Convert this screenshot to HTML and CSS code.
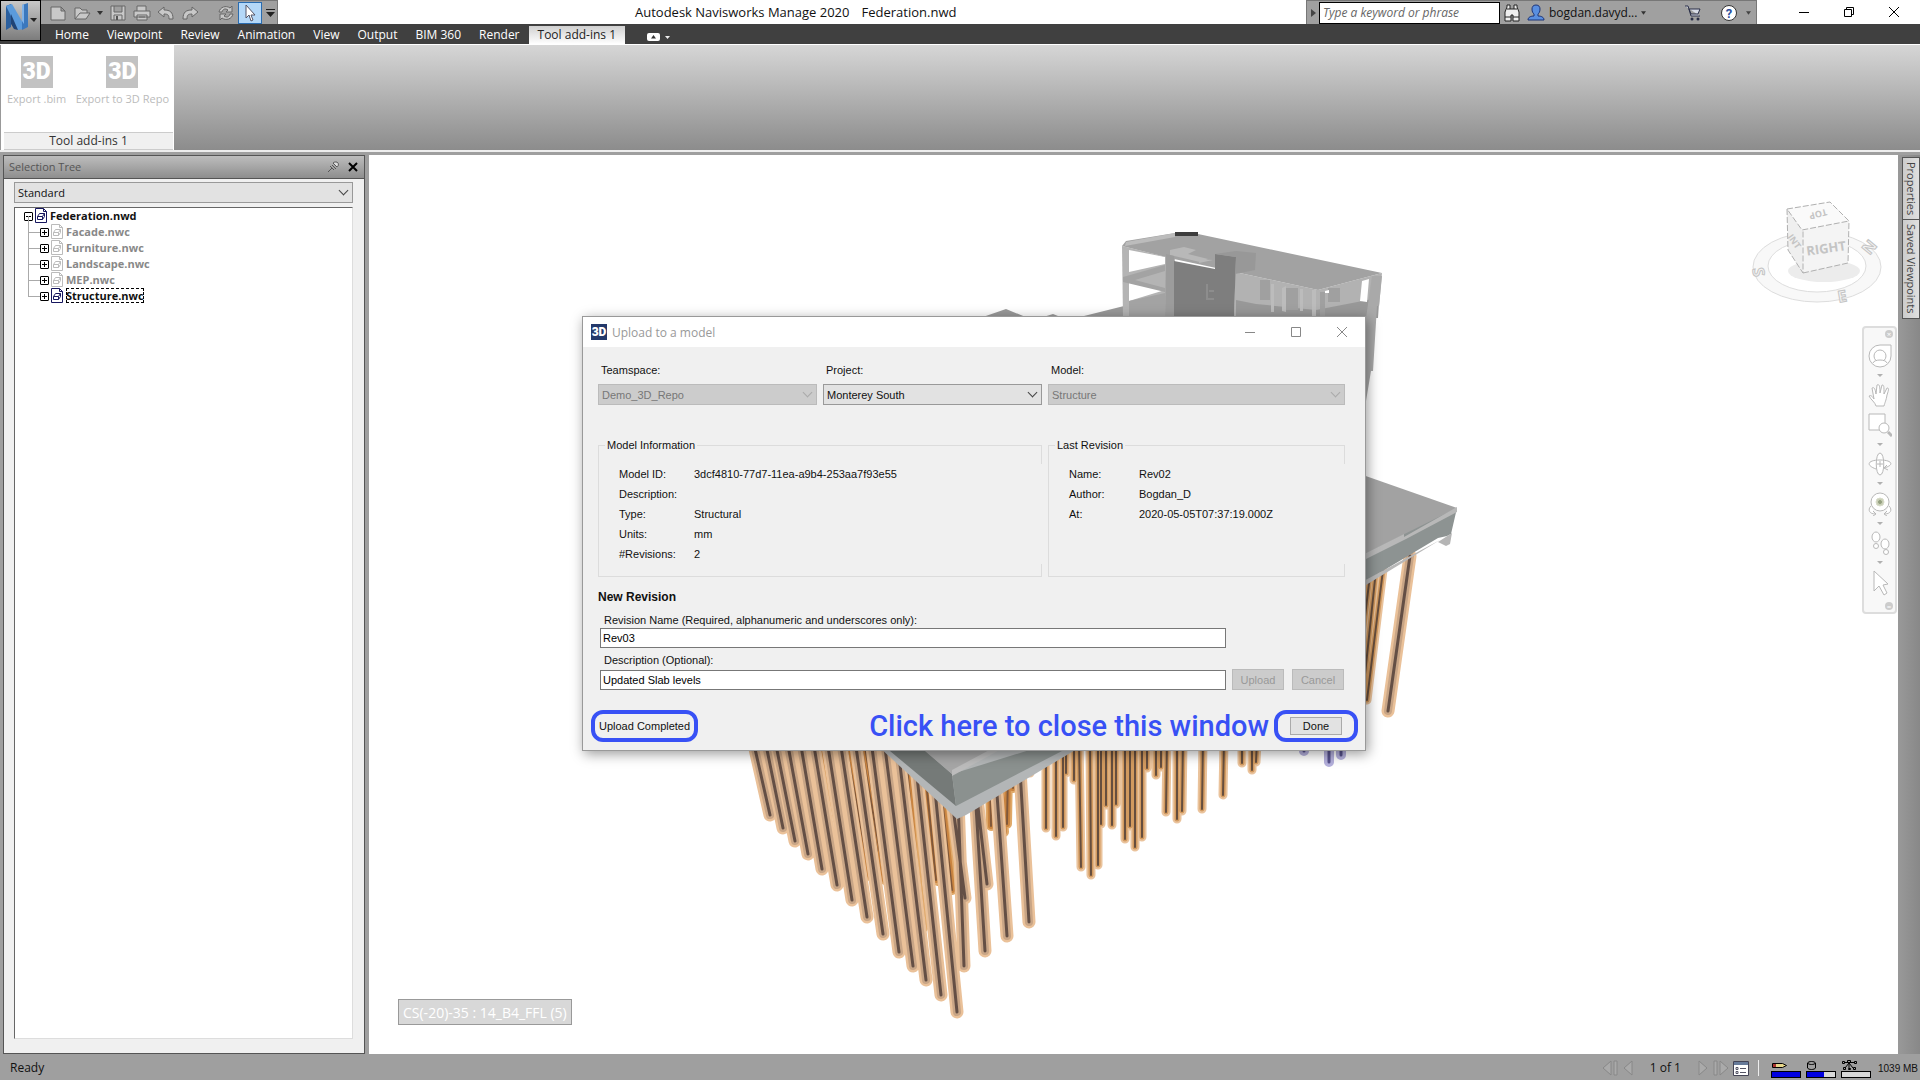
FILE: index.html
```html
<!DOCTYPE html>
<html lang="en">
<head>
    <meta charset="UTF-8">
    <meta name="viewport" content="width=device-width, initial-scale=1.0">
    <title>Autodesk Navisworks Manage 2020</title>
    <link rel="stylesheet" href="styles.css">
</head>
<body>
    <header class="top">
        <button class="app-button" aria-label="Application menu">
            <svg width="38" height="39" viewBox="0 0 38 39">
                <path d="M5 5l5-2v23l-5 3z" fill="#2b5f9e"/>
                <path d="M5 5l6-2 11 19v6l-5 1z" fill="#5b9bdc"/>
                <path d="M10 13l7 16-4-1-3-5z" fill="#1f4477"/>
                <path d="M21 4l6-2v24l-6 3z" fill="#3b78bd"/>
                <path d="M21 4l2-1v20l-2-3z" fill="#7fb2e8"/>
                <path d="M29 17h7l-3 4z" fill="#222"/>
            </svg>
        </button>
        <div class="top-rows">
            <div class="title-bar">
                <div class="quick-access">
                    <button class="qa" aria-label="New"><svg width="18" height="16" viewBox="0 0 18 16"><path d="M2 2h10l4 4v9H2z M12 2v4h4" class="qi"/></svg></button>
                    <button class="qa" aria-label="Open"><svg width="18" height="16" viewBox="0 0 18 16"><path d="M2 14V3h5l2 2h5v3 M2 14l5-6h10l-4 6z" class="qi"/></svg></button>
                    <button class="qa drop" aria-label="Open options"><svg width="6" height="4" viewBox="0 0 6 4"><path d="M0 0h6L3 4z" fill="#333"/></svg></button>
                    <button class="qa" aria-label="Save"><svg width="18" height="16" viewBox="0 0 18 16"><path d="M2 1h14v14H2z M5 1v6h8V1 M5 15v-5h8v5" class="qi"/><path d="M7 11h2v4H7z" fill="#555"/></svg></button>
                    <button class="qa" aria-label="Print"><svg width="18" height="16" viewBox="0 0 18 16"><path d="M4 6V1h9v5 M1 6h16v6H1z M4 10h10v5H4z M6 12h6" class="qi"/></svg></button>
                    <button class="qa" aria-label="Undo"><svg width="18" height="16" viewBox="0 0 18 16"><path d="M1 7l6-5v3c6 0 9 2 9 9h-4c0-4-1-5-5-5v3z" class="qi"/></svg></button>
                    <button class="qa" aria-label="Redo"><svg width="18" height="16" viewBox="0 0 18 16"><path d="M17 7l-6-5v3C5 5 2 7 2 14h4c0-4 1-5 5-5v3z" class="qi"/></svg></button>
                    <button class="qa refresh" aria-label="Refresh"><svg width="18" height="16" viewBox="0 0 18 16"><path d="M2 7c1-5 7-7 11-4l2-2v6H9l2-2C8 3 6 4 5 7z M16 9c-1 5-7 7-11 4l-2 2V9h6l-2 2c3 2 5 1 6-2z" class="qi"/></svg></button>
                    <button class="qa select-tool" aria-label="Select"><svg width="14" height="18" viewBox="0 0 14 18"><path d="M3 1v13l3-3 2 6 2-1-2-5h4z" fill="#fff" stroke="#556"/></svg></button>
                    <button class="qa drop" aria-label="Customize"><svg width="9" height="8" viewBox="0 0 9 8"><path d="M0 0h9v1H0z M0 3h9L4.500 8z" fill="#222"/></svg></button>
                </div>
                <div class="app-title"><span>Autodesk Navisworks Manage 2020</span><span>Federation.nwd</span></div>
                <div class="info-center">
                    <svg width="5" height="8" viewBox="0 0 5 8"><path d="M0 0l5 4-5 4z" fill="#444"/></svg>
                    <input class="search" type="text" placeholder="Type a keyword or phrase" aria-label="Search">
                    <button class="info-btn" aria-label="Find"><svg width="18" height="18" viewBox="0 0 18 18"><path d="M2 8l2-5V1h3v4h4V1h3v2l2 5v9h-6v-6H8v6H2z M2 13h6 M10 13h6 M4 5h3 M11 5h3" fill="#eee" stroke="#222"/></svg></button>
                    <button class="info-btn user"><svg width="18" height="18" viewBox="0 0 18 18"><path d="M9 1c3 0 4 2 4 4 0 3-1 4-2 5v2c3 0 6 1 6 4H1c0-3 3-4 6-4v-2C6 9 5 8 5 5c0-2 1-4 4-4z" fill="#5a8fe0" stroke="#1d3478"/></svg><span>bogdan.davyd...</span><svg width="5" height="4" viewBox="0 0 6 4"><path d="M0 0h6L3 4z" fill="#333"/></svg></button>
                    <button class="info-btn cart" aria-label="Store"><svg width="18" height="18" viewBox="0 0 18 18"><path d="M1 2h3l3 10h9 M5 5h11l-2 5H7z" fill="#d8dde8" stroke="#2a2f48"/><circle cx="8" cy="15" r="1.500" fill="#2a2f48"/><circle cx="14" cy="15" r="1.500" fill="#2a2f48"/></svg></button>
                    <button class="info-btn help" aria-label="Help"><svg width="18" height="18" viewBox="0 0 18 18"><circle cx="9" cy="9" r="7.500" fill="#fff" stroke="#333"/><text x="9" y="14" class="q-mark">?</text></svg></button>
                    <svg width="5" height="4" viewBox="0 0 6 4"><path d="M0 0h6L3 4z" fill="#444"/></svg>
                </div>
                <div class="window-buttons">
                    <button aria-label="Minimize"><svg width="12" height="12" viewBox="0 0 12 12"><path d="M1 6.500h10" stroke="#000"/></svg></button>
                    <button aria-label="Restore"><svg width="12" height="12" viewBox="0 0 12 12"><path d="M1.500 3.500h7v7h-7z M3.500 3V1.500h7v7H9" fill="none" stroke="#000"/></svg></button>
                    <button aria-label="Close"><svg width="12" height="12" viewBox="0 0 12 12"><path d="M1 1l10 10M11 1L1 11" stroke="#000"/></svg></button>
                </div>
            </div>
            <nav class="menu">
                <a href="#">Home</a>
                <a href="#">Viewpoint</a>
                <a href="#">Review</a>
                <a href="#">Animation</a>
                <a href="#">View</a>
                <a href="#">Output</a>
                <a href="#">BIM 360</a>
                <a href="#">Render</a>
                <a href="#" class="active">Tool add-ins 1</a>
                <button class="ribbon-toggle" aria-label="Minimize ribbon"><svg width="24" height="8" viewBox="0 0 24 8"><rect width="13" height="8" rx="2" fill="#fff"/><path d="M4 5.500L6.500 2 9 5.500z" fill="#333"/><path d="M18 3h5l-2.500 3z" fill="#eee"/></svg></button>
            </nav>
        </div>
    </header>

    <section class="ribbon">
        <div class="ribbon-panel">
            <div class="ribbon-tools">
                <button disabled><span class="logo-3d">3D</span>Export .bim</button>
                <button disabled><span class="logo-3d">3D</span>Export to 3D Repo</button>
            </div>
            <div class="ribbon-label">Tool add-ins 1</div>
        </div>
    </section>

    <main class="workspace">
        <aside class="tree-panel">
            <div class="panel-head">
                <h2>Selection Tree</h2>
                <button aria-label="Pin"><svg width="12" height="12" viewBox="0 0 12 12"><path d="M1 11l4-4 M3 5l4 4 M5 4l4 4 M6 2l4 4c2-1 2-5-1-5-1 0-2 0-3 1z" fill="#ddd" stroke="#555"/></svg></button>
                <button aria-label="Close"><svg width="10" height="10" viewBox="0 0 10 10"><path d="M1 1l8 8M9 1L1 9" stroke="#000" stroke-width="2"/></svg></button>
            </div>
            <div class="panel-body">
                <div class="select">
                    <select aria-label="Tree view"><option>Standard</option></select>
                </div>
                <ul class="tree">
                    <li class="root"><button class="toggle minus" aria-label="Collapse"></button><svg class="doc" width="12" height="15" viewBox="0 0 12 15"><use href="#doc"/></svg><span>Federation.nwd</span>
                        <ul>
                            <li class="off"><button class="toggle" aria-label="Expand"></button><svg class="doc" width="12" height="15" viewBox="0 0 12 15"><use href="#doc"/></svg><span>Facade.nwc</span></li>
                            <li class="off"><button class="toggle" aria-label="Expand"></button><svg class="doc" width="12" height="15" viewBox="0 0 12 15"><use href="#doc"/></svg><span>Furniture.nwc</span></li>
                            <li class="off"><button class="toggle" aria-label="Expand"></button><svg class="doc" width="12" height="15" viewBox="0 0 12 15"><use href="#doc"/></svg><span>Landscape.nwc</span></li>
                            <li class="off"><button class="toggle" aria-label="Expand"></button><svg class="doc" width="12" height="15" viewBox="0 0 12 15"><use href="#doc"/></svg><span>MEP.nwc</span></li>
                            <li class="picked"><button class="toggle" aria-label="Expand"></button><svg class="doc" width="12" height="15" viewBox="0 0 12 15"><use href="#doc"/></svg><span>Structure.nwc</span></li>
                        </ul>
                    </li>
                </ul>
            </div>
        </aside>

        <div class="viewport">
            <svg class="scene" viewBox="369 155 1529 899" preserveAspectRatio="xMidYMid slice">
                <defs>
                    <g id="doc"><path d="M.5 .5h8l3 3v11H.5z M8.500 .5v3h3" fill="#fff" stroke="currentColor"/><path d="M2.500 8.500h5v3h-5z M2.500 8.500l2-3h5l-2 3 M9.500 5.500v3l-2 3" fill="none" stroke="currentColor"/></g>
                    <path id="piles-back" d="M772 740L792 805M798 740L813 795M788 740L808 808M806 740L825 833M832 740L846 821M822 740L838 820M845 740L870 876M858 740L877 851M864 740L884 864M876 740L895 875M838 740L860 850M850 740L872 862M890 740L908 886M900 740L923 928M912 740L930 872M905 740L918 900M922 740L936 880M930 740L948 883M926 740L947 914M940 780L952 890M860 740L885 880M873 740L900 890M887 740L915 905M990 780L991 826M1000 780L1004 832M1008 770L1007 824M1012 770L1013 788"/>
                    <path id="piles-small" d="M1046 740V828M1056 740V836M1063 740V827M1030 750V773M1066 740V773M1074 740V780M1079 740L1081 867M1090 740L1091 875M1098 740V865M1101 740V824M1106 740V805M1112 740V825M1116 740V804M1125 740V839M1135 740V847M1130 740V826M1142 740V837M1147 740V768M1156 740V775M1161 740V767M1167 740L1166 812M1177 740V819M1183 740L1182 811M1203 740L1202 809M1224 740L1223 795M1242 740V763M1252 740V770M1257 740L1256 762M1376 570L1362 703M1383 570L1367 700M1370 575L1355 700"/>
                    <path id="piles-front" d="M753 740L770 815M765 740L783 828M775 740L795 841M787 740L808 854M800 740L822 869M813 740L837 885M827 740L852 900M840 740L867 917M855 740L883 934M871 740L899 952M884 740L913 966M897 740L926 980M913 740L941 995M930 740L957 1012M952 800L965 898M958 800L964 966M976 790L987 884M975 790L985 951M996 780L1007 936M1020 770L1029 922M1410 556L1388 711"/>
                </defs>
                <!-- upper building -->
                <path d="M980 318l26-9 22 9zM1040 318l13-4 10 4zM1080 317l44-11h40v11z" fill="#9a9a9a"/>
                <path d="M1122 246l53 13v60h-52z" fill="#b4b4b4"/>
                <path d="M1129 250l36 7v7l-36 8zM1129 280l36 10-36 11z" fill="#fff"/>
                <path d="M1123 277l42-12v6l-30 9 30 8v4l-42-10zM1129 301l36-8v24h-36z" fill="#a3a3a3"/>
                <path d="M1235 272l83 18 64-17-4 45h-144z" fill="#b2b2b2"/>
                <path d="M1236 300l20 4 60 6 62-12v20h-142z" fill="#989898"/>
                <path d="M1260 280h10v20h-10zM1282 288h16v22h-16zM1320 292h5v26h-5zM1328 288h12v14h-12z" fill="#a0a0a0"/>
                <path d="M1271 284h3v28h-3zM1282 288l4-2v26l-4-1zM1300 289h3v22h-3zM1312 290h4v28h-4z" fill="#bcbcbc"/>
                <path d="M1362 281l7-2-2 23-7-1zM1325 291l4-1v3h-4z" fill="#fff"/>
                <path d="M1372 276h10l-3 30h-2l-4 65h-2l-5 30V318z" fill="#a9a9a9"/>
                <path d="M1122 246l4-5 49-8 23 1 184 39-64 17-83-18-61-13z" fill="#a2a2a2"/>
                <path d="M1126 242l49-9v4l-50 9z" fill="#bcbcbc"/>
                <path d="M1175 232h23v4h-23z" fill="#3d3d3d"/>
                <path d="M1170 250l14-3 12 3-8 4 20 5-8 3-30-7zM1199 259l14 1-14 3z" fill="#b8b8b8"/>
                <path d="M1166 254l8 2v62h-9z" fill="#9c9c9c"/>
                <path d="M1174 261l41 8v-15l21 3-2 61h-60z" fill="#7e7e7e"/>
                <path d="M1236 257l20-4-1 17-20 4zM1215 254l21-3 20 2-20 4z" fill="#989898"/>
                <path d="M1207 284v16M1209 291h5M1208 299h6" stroke="#9c9c9c" fill="none"/>
                <!-- foundation piles -->
                <path d="M845 745h100l10 60-2 85-30-8-40-20-25-40z" fill="#d6944f"/>
                <use href="#piles-back" stroke="#e0a969" stroke-width="10" stroke-linecap="round"/>
                <use href="#piles-back" stroke="#c98440" stroke-width="6" stroke-linecap="round"/>
                <use href="#piles-back" stroke="#80583a" stroke-width="2" stroke-linecap="round"/>
                <use href="#piles-small" stroke="#eac39c" stroke-width="9" stroke-linecap="round"/>
                <use href="#piles-small" stroke="#d29a5f" stroke-width="5" stroke-linecap="round"/>
                <use href="#piles-small" stroke="#664e3e" stroke-width="2" stroke-linecap="round"/>
                <use href="#piles-front" stroke="#eac199" stroke-width="13" stroke-linecap="round"/>
                <use href="#piles-front" stroke="#c8a586" stroke-width="8" stroke-linecap="round"/>
                <use href="#piles-front" stroke="#644f45" stroke-width="3" stroke-linecap="round"/>
                <path d="M1304 740v11M1329 740v22M1341 740v15" stroke="#b4b0dc" stroke-width="10" stroke-linecap="round"/>
                <path d="M1304 740v11M1329 740v22M1341 740v15" stroke="#55508a" stroke-width="3" stroke-linecap="round"/>
                <!-- slab -->
                <path d="M878 746l79 73 9-4 116-69z" fill="#b3b6b7"/>
                <path d="M884 746h36l32 28 4 32z" fill="#757a78"/>
                <path d="M952 774l110-34v11l-106 55z" fill="#8b918f"/>
                <path d="M912 740l40 34 66-34z" fill="#a6a6a6"/>
                <path d="M952 770l56-30h10l-66 36z" fill="#bcbcbc"/>
                <path d="M1360 474l97 34-51 30-46 22z" fill="#a2a2a2"/>
                <path d="M1457 508l-6 26-4 2-9 2-72 43-6 3v-28z" fill="#8d9392"/>
                <path d="M1457 507v5l-51 27-46 23v-6l44-22v3z" fill="#b8b8b8"/>
                <path d="M1438 542l14-9-2 11-4 2z" fill="#b5b5b5"/>
                <path d="M1360 583l80-43-74 45z" fill="#b8b8b8"/>
            </svg>

            <svg class="view-cube" width="140" height="110" viewBox="0 0 140 110">
                <path fill-rule="evenodd" d="M5 66a64 35 0 1 0 128 0a64 35 0 1 0-128 0z M20 65a49 26 0 1 0 98 0a49 26 0 1 0-98 0z" fill="#f8f8f8" stroke="#ddd"/>
                <ellipse cx="76" cy="70" rx="36" ry="11" fill="#ececec"/>
                <path d="M39 8l43-7 19 19-47 9z" fill="#fafafa"/>
                <path d="M39 8l15 21 1 43-15-23z" fill="#efefef"/>
                <path d="M54 29l47-9-1 42-45 10z" fill="#f4f4f4"/>
                <path d="M39 8l43-7 19 19-47 9zM39 8l1 41 15 23V29M55 72l45-10 1-42" fill="none" stroke="#b0b0b0" stroke-dasharray="6 2"/>
                <text x="78" y="52" class="face" transform="rotate(-8 78 47)">RIGHT</text>
                <text x="70" y="16" class="face top-face" transform="rotate(165 70 13)">TOP</text>
                <text x="47" y="44" class="face top-face" transform="rotate(55 47 40)">INT</text>
                <text x="11" y="77" class="point" transform="rotate(80 11 71)">S</text>
                <text x="94" y="101" class="point" transform="rotate(-10 94 95)">E</text>
                <text x="121" y="52" class="point" transform="rotate(-50 121 46)">N</text>
            </svg>

            <div class="nav-bar">
                <button class="dot" aria-label="Close navigation bar">×</button>
                <button aria-label="Steering wheel"><svg width="24" height="24" viewBox="0 0 24 24"><path d="M12 1h11v11a11 11 0 1 1-11-11z"/><circle cx="12" cy="12" r="6"/><path d="M5 19c1-4 13-4 14 0"/></svg></button>
                <i class="caret"></i>
                <button aria-label="Pan"><svg width="24" height="24" viewBox="0 0 24 24"><path d="M8 23c-1-4-5-6-7-10 2-1 3 0 5 3L4 5c2-1 3 0 4 6L9 2c2-1 3 0 3 8l2-8c2 0 2 1 2 9l3-6c2 0 2 1 0 7-1 6-2 7-3 11z"/></svg></button>
                <button aria-label="Zoom window"><svg width="24" height="24" viewBox="0 0 24 24"><path d="M12 17H1V1h16v10"/><circle cx="16" cy="15" r="5"/><path d="M20 19l4 4" stroke-width="3"/></svg></button>
                <i class="caret"></i>
                <button aria-label="Orbit"><svg width="24" height="24" viewBox="0 0 24 24"><path d="M8 17C-3 13 0 8 12 8s15 5 4 8l3-3m-3 3l4 2 M12 1c5 0 5 22 0 22S7 1 12 1z M9 12h6M12 9v6"/></svg></button>
                <i class="caret"></i>
                <button aria-label="Look around"><svg width="24" height="24" viewBox="0 0 24 24"><circle cx="12" cy="10" r="9"/><circle cx="12" cy="10" r="4" fill="#c9cfb6" stroke="#d8dccb"/><circle cx="12" cy="10" r="1.500" fill="#94a080" stroke="#94a080"/><path d="M3 14c-4 4-1 8 4 8m-2-3l3 3-3 2 M21 14c4 4 1 8-4 8m2-3l-3 3 3 2"/></svg></button>
                <i class="caret"></i>
                <button aria-label="Walk"><svg width="24" height="24" viewBox="0 0 24 24"><ellipse cx="8" cy="6" rx="4" ry="5"/><circle cx="8" cy="15" r="2.500"/><ellipse cx="17" cy="13" rx="4" ry="5"/><circle cx="18" cy="21" r="2.500"/></svg></button>
                <i class="caret"></i>
                <button aria-label="Select"><svg width="24" height="26" viewBox="0 0 24 26"><path d="M6 1v20l5-5 5 9 3-2-4-8 5-1z"/></svg></button>
                <button class="dot" aria-label="Navigation bar options">=</button>
            </div>

            <div class="grid-location">CS(-20)-35 : 14_B4_FFL (5)</div>

            <form class="dialog">
                <div class="dialog-head">
                    <span class="logo-3d">3D</span>
                    <h1>Upload to a model</h1>
                    <button type="button" aria-label="Minimize"><svg width="12" height="12" viewBox="0 0 12 12"><path d="M1 6.500h10"/></svg></button>
                    <button type="button" aria-label="Maximize"><svg width="12" height="12" viewBox="0 0 12 12"><path d="M1.500 1.500h9v9h-9z"/></svg></button>
                    <button type="button" aria-label="Close"><svg width="12" height="12" viewBox="0 0 12 12"><path d="M1 1l10 10M11 1L1 11"/></svg></button>
                </div>
                <div class="dialog-body">
                    <div class="pickers">
                        <div>
                            <label for="teamspace">Teamspace:</label>
                            <div class="select disabled"><select id="teamspace" disabled><option>Demo_3D_Repo</option></select></div>
                        </div>
                        <div>
                            <label for="project">Project:</label>
                            <div class="select"><select id="project"><option>Monterey South</option></select></div>
                        </div>
                        <div>
                            <label for="model">Model:</label>
                            <div class="select disabled"><select id="model" disabled><option>Structure</option></select></div>
                        </div>
                    </div>
                    <div class="groups">
                        <fieldset>
                            <legend>Model Information</legend>
                            <dl class="info">
                                <dt>Model ID:</dt><dd>3dcf4810-77d7-11ea-a9b4-253aa7f93e55</dd>
                                <dt>Description:</dt><dd></dd>
                                <dt>Type:</dt><dd>Structural</dd>
                                <dt>Units:</dt><dd>mm</dd>
                                <dt>#Revisions:</dt><dd>2</dd>
                            </dl>
                        </fieldset>
                        <fieldset>
                            <legend>Last Revision</legend>
                            <dl class="info">
                                <dt>Name:</dt><dd>Rev02</dd>
                                <dt>Author:</dt><dd>Bogdan_D</dd>
                                <dt>At:</dt><dd>2020-05-05T07:37:19.000Z</dd>
                            </dl>
                        </fieldset>
                    </div>
                    <h2>New Revision</h2>
                    <div class="field">
                        <label for="rev-name">Revision Name (Required, alphanumeric and underscores only):</label>
                        <input id="rev-name" type="text" value="Rev03">
                    </div>
                    <div class="field-row">
                        <div class="field">
                            <label for="rev-desc">Description (Optional):</label>
                            <input id="rev-desc" type="text" value="Updated Slab levels">
                        </div>
                        <button type="button" disabled>Upload</button>
                        <button type="button" disabled>Cancel</button>
                    </div>
                </div>
                <div class="dialog-foot">
                    <div class="ring">Upload Completed</div>
                    <strong>Click here to close this window</strong>
                    <div class="ring done"><button type="button">Done</button></div>
                </div>
            </form>
        </div>

        <div class="side-tabs">
            <button>Properties</button>
            <button>Saved Viewpoints</button>
        </div>
    </main>

    <footer class="status">
        <span class="ready">Ready</span>
        <div class="pager">
            <button aria-label="First sheet"><svg width="16" height="16" viewBox="0 0 16 16"><path d="M9 1v14L1 8zM12 1h3v14h-3z"/></svg></button>
            <button aria-label="Previous sheet"><svg width="12" height="16" viewBox="0 0 12 16"><path d="M10 1v14L2 8z"/></svg></button>
            <span>1 of 1</span>
            <button aria-label="Next sheet"><svg width="12" height="16" viewBox="0 0 12 16"><path d="M2 1v14l8-7z"/></svg></button>
            <button aria-label="Last sheet"><svg width="16" height="16" viewBox="0 0 16 16"><path d="M1 1h3v14H1zM7 1v14l8-7z"/></svg></button>
            <button aria-label="Sheet browser"><svg width="16" height="16" viewBox="0 0 16 16"><path d="M.5 1.500h15v14H.5z" fill="#fff" stroke="#445"/><path d="M1 2h14v3H1z" fill="#667a99" stroke="none"/><path d="M3 7.500h2v2H3zM7 8.500h6M3 11.500h2v2H3zM7 12.500h6" fill="none" stroke="#556"/></svg></button>
        </div>
        <div class="gauges">
            <div class="gauge"><svg width="30" height="12" viewBox="0 0 30 12"><path d="M1.500 4.500h10l4 2-4 2h-10z" fill="#e8d88a" stroke="#000"/><path d="M2 5h3v3H2z" fill="#a33"/></svg><i class="bar full"></i></div>
            <div class="gauge"><svg width="30" height="12" viewBox="0 0 30 12"><path d="M1.500 4v5c1 2 7 2 8 0V4c-1-2-7-2-8 0zc1 2 7 2 8 0" fill="none" stroke="#000"/></svg><i class="bar part"></i></div>
            <div class="gauge"><svg width="30" height="12" viewBox="0 0 30 12"><path d="M1.500 2.500h2v2h-2zM13.500 2.500h2v2h-2zM6.500 1.500h3v2h-3zM8 4v5M4 9l4-5 4 5M4 3.500h9M2.500 8.500h2v2h-2zM7.500 9.500h2v1h-2zM12.500 8.500h2v2h-2z" fill="none" stroke="#000"/></svg><i class="bar"></i></div>
        </div>
        <span class="memory">1039 MB</span>
    </footer>
</body>
</html>
```

FILE: styles.css
```css
* {
    box-sizing: border-box;
}

body {
    margin: 0;
    height: 100vh;
    display: flex;
    flex-direction: column;
    overflow: hidden;
    background: #9f9f9f;
    color: #111;
    font: 12px/16px "Open Sans", "Noto Sans", sans-serif;
}

button {
    padding: 0;
    border: 0;
    background: none;
    color: inherit;
    font: inherit;
}

svg {
    display: block;
    flex: none;
}

h1, h2, ul, dl, dd, fieldset {
    margin: 0;
    padding: 0;
}

/* title bar and menu */
.top {
    display: flex;
    background: #404040;
}

.app-button {
    width: 41px;
    height: 41px;
    border: 1px solid #000;
    background: linear-gradient(#c8c8c8, #7c7c7c);
}

.top-rows {
    flex: 1;
}

.title-bar {
    display: flex;
    justify-content: space-between;
    height: 24px;
    background: #fff;
}

.quick-access {
    display: flex;
    align-items: center;
    width: 237px;
    padding-left: 5px;
    background: #a0a0a0;
    border-top: 1px solid #777;
    border-right: 1px solid #777;
}

.qa {
    width: 24px;
    display: flex;
    justify-content: center;
}

.qa.drop {
    width: 12px;
}

.qa.refresh {
    margin-left: 12px;
}

.qa.select-tool {
    height: 22px;
    align-items: center;
    background: #b4d8f8;
    border: 1px solid #2a6cb0;
}

.qa.select-tool + .drop {
    margin-left: 2px;
}

.qi {
    fill: #c8c8c8;
    stroke: #666;
}

.app-title {
    display: flex;
    gap: 12px;
    padding-left: 357px;
    margin-right: auto;
    line-height: 24px;
    font-size: 13px;
}

.info-center {
    display: flex;
    align-items: center;
    width: 451px;
    padding: 0 5px 0 4px;
    background: #a0a0a0;
    border: 1px solid #777;
    border-width: 1px 1px 0;
}

.search {
    width: 181px;
    height: 22px;
    margin: 0 3px;
    padding: 0 3px;
    border: 1px solid #000;
    font: italic 12px "Open Sans", sans-serif;
}

.search::placeholder {
    color: #666;
}

.info-btn.user {
    display: flex;
    align-items: center;
    gap: 4px;
    margin-left: 6px;
}

.info-btn.cart {
    margin-left: auto;
}

.info-btn.help {
    margin: 0 8px 0 18px;
}

.q-mark {
    font: bold 13px Roboto, sans-serif;
    text-anchor: middle;
    fill: #2c4f9e;
}

.window-buttons {
    display: flex;
    width: 163px;
    padding-left: 24px;
}

.window-buttons button {
    width: 45px;
    display: flex;
    justify-content: center;
    align-items: center;
}

.menu {
    display: flex;
    align-items: flex-end;
    height: 20px;
    padding-left: 5px;
}

.menu a {
    padding: 0 9px;
    line-height: 18px;
    color: #fff;
    text-decoration: none;
}

.menu .active {
    background: linear-gradient(#d0d0d0, #fff);
    color: #222;
}

.ribbon-toggle {
    margin-left: 22px;
    height: 14px;
}

/* ribbon */
.ribbon {
    height: 108px;
    border-top: 1px solid #fff;
    border-bottom: 2px solid #eee;
    background: linear-gradient(#d6d6d6, #8c8c8c);
}

.ribbon-panel {
    width: 174px;
    height: 100%;
    display: flex;
    flex-direction: column;
    justify-content: space-between;
    padding: 11px 1px 0 3px;
    background: #fff;
    border-left: 1px solid #999;
}

.ribbon-tools {
    display: flex;
    justify-content: space-between;
    padding: 0 4px 0 3px;
    white-space: nowrap;
}

.ribbon-tools button {
    display: flex;
    flex-direction: column;
    align-items: center;
    gap: 3px;
    font-size: 11px;
    color: #bbb;
}

.logo-3d {
    display: block;
    width: 32px;
    background: #c2c2c2;
    color: #fff;
    font: 900 23px/32px Roboto, sans-serif;
    text-align: center;
}

.ribbon-label {
    background: #f0f0f0;
    border: 1px solid #ccc;
    border-width: 1px 0;
    text-align: center;
    color: #333;
}

/* workspace */
.workspace {
    flex: 1;
    display: flex;
    min-height: 0;
    padding-top: 3px;
    padding-left: 3px;
}

.tree-panel {
    width: 362px;
    margin-right: 4px;
    display: flex;
    flex-direction: column;
    border: 1px solid #555;
    background: #f0f0f0;
}

.panel-head {
    display: flex;
    align-items: center;
    gap: 9px;
    height: 23px;
    padding: 0 6px 0 5px;
    background: linear-gradient(#bdbdbd, #8e8e8e);
    border-bottom: 1px solid #555;
}

.panel-head h2 {
    flex: 1;
    font-size: 11px;
    font-weight: normal;
    color: #555;
}

.panel-body {
    flex: 1;
    display: flex;
    flex-direction: column;
    gap: 4px;
    padding: 3px 11px 14px 10px;
}

.select {
    position: relative;
}

.select::after {
    content: "";
    position: absolute;
    right: 6px;
    top: 5px;
    width: 6px;
    height: 6px;
    border: solid #444;
    border-width: 0 1px 1px 0;
    transform: rotate(45deg);
}

.select select {
    display: block;
    width: 100%;
    height: 21px;
    padding: 0 3px;
    appearance: none;
    border: 1px solid #999;
    border-radius: 0;
    background: #e2e2e2;
    color: #111;
    font: inherit;
}

.select.disabled::after {
    border-color: #aaa;
}

.select.disabled select {
    background: #ccc;
    border-color: #bbb;
    color: #777;
    opacity: 1;
}

.panel-body .select {
    font-size: 11px;
}

.tree {
    flex: 1;
    list-style: none;
    background: #fff;
    border: 1px solid #ddd;
    border-top: 1px solid #666;
    border-left: 1px solid #666;
    padding-left: 9px;
    font-size: 11px;
    font-weight: bold;
}

.tree ul {
    list-style: none;
    margin-left: 4px;
}

.tree ul li {
    position: relative;
    padding-left: 12px;
}

.tree ul li::before {
    content: "";
    position: absolute;
    left: 0;
    top: -8px;
    width: 11px;
    height: 16px;
    border: solid #aaa;
    border-width: 0 0 1px 1px;
}

.toggle {
    position: relative;
    width: 9px;
    height: 9px;
    border: 1px solid #000;
    border-radius: 1px;
    background: #fff;
}

.toggle::before, .toggle:not(.minus)::after {
    content: "";
    position: absolute;
    left: 1px;
    top: 3px;
    width: 5px;
    height: 1px;
    background: #000;
}

.toggle:not(.minus)::after {
    transform: rotate(90deg);
}

.doc {
    display: inline-block;
    vertical-align: top;
    margin: 0 3px 0 2px;
    color: #16165e;
}

.off {
    color: #888;
}

.off .doc {
    color: #bbb;
}

.picked span {
    outline: 1px dashed #000;
    outline-offset: -1px;
}

/* 3d viewport */
.viewport {
    flex: 1;
    position: relative;
    overflow: hidden;
    background: #fff;
}

.scene {
    width: 100%;
    height: 100%;
}

.view-cube {
    position: absolute;
    right: 10px;
    top: 46px;
    overflow: visible;
}

.face {
    font: bold 13px "Open Sans", sans-serif;
    text-anchor: middle;
    fill: #c4c4c4;
}

.top-face {
    font-size: 9px;
}

.point {
    font: bold 16px "Open Sans", sans-serif;
    text-anchor: middle;
    fill: #f4f4f4;
    stroke: #c4c4c4;
}

.nav-bar {
    position: absolute;
    right: 1px;
    top: 171px;
    width: 35px;
    height: 288px;
    padding: 2px 0;
    display: flex;
    flex-direction: column;
    justify-content: space-between;
    align-items: center;
    border: 2px solid #ddd;
    border-radius: 4px;
    background: #f8f8f8;
}

.nav-bar svg {
    fill: #fff;
    stroke: #b8b8b8;
}

.nav-bar .dot {
    align-self: flex-end;
    width: 8px;
    height: 8px;
    margin-right: 2px;
    border-radius: 50%;
    background: #ccc;
    color: #fff;
    font-size: 8px;
    line-height: 8px;
}

.caret {
    border: 3px solid transparent;
    border-top-color: #b0b0b0;
    border-bottom: 0;
}

.grid-location {
    position: absolute;
    left: 29px;
    bottom: 29px;
    padding: 4px 4px 2px;
    border: 1px solid #999;
    background: #d8d8d8;
    color: #fff;
    font-size: 14px;
    line-height: 18px;
}

.side-tabs {
    width: 22px;
    padding: 2px 0 0 4px;
    background: linear-gradient(90deg, #999, #888);
}

.side-tabs button {
    display: block;
    writing-mode: vertical-rl;
    width: 18px;
    padding: 4px 0;
    border: 1px solid #555;
    background: linear-gradient(90deg, #ccc, #e0e0e0);
    color: #444;
    font-size: 11px;
    line-height: 16px;
}

.side-tabs button + button {
    margin-top: -1px;
}

/* upload dialog */
.dialog {
    position: absolute;
    left: 213px;
    top: 161px;
    width: 784px;
    border: 1px solid #999;
    background: #f0f0f0;
    box-shadow: 2px 3px 12px rgba(0, 0, 0, 0.4);
    font: 11px/16px "Liberation Sans", Arial, sans-serif;
}

.dialog-head {
    display: flex;
    align-items: center;
    height: 30px;
    padding: 0 17px 0 8px;
    background: #fff;
}

.dialog-head .logo-3d {
    width: 16px;
    background: #24396b;
    font-size: 12px;
    line-height: 16px;
}

.dialog-head h1 {
    flex: 1;
    margin-left: 5px;
    font: 12px "Open Sans", sans-serif;
    color: #999;
}

.dialog-head button {
    margin-left: 34px;
}

.dialog-head svg {
    fill: none;
    stroke: #888;
}

.dialog-body {
    padding: 15px 20px 0 15px;
}

.pickers {
    display: grid;
    grid-template-columns: 219px 219px 1fr;
    gap: 6px;
}

.pickers label {
    display: block;
    margin: 0 3px 6px;
}

.groups {
    display: grid;
    grid-template-columns: 444px 1fr;
    gap: 6px;
    margin-top: 32px;
}

.groups fieldset {
    height: 140px;
    border: 1px solid #dcdcdc;
    min-width: 0;
}

.groups legend {
    margin-left: 6px;
    padding: 0 2px;
}

.info {
    display: grid;
    grid-template-columns: 75px 1fr;
    grid-auto-rows: 20px;
    height: 100px;
    margin: 11px -1px 0 0;
    padding-left: 20px;
    line-height: 20px;
    background: #f0f0f0;
}

fieldset + fieldset .info {
    grid-template-columns: 70px 1fr;
}

.dialog-body h2 {
    margin: 12px 0 7px;
    font-size: 12px;
    font-weight: bold;
}

.field {
    width: 626px;
    margin-left: 2px;
}

.field label {
    display: block;
    margin-left: 4px;
}

.field input {
    display: block;
    width: 100%;
    height: 20px;
    padding: 0 2px;
    border: 1px solid #777;
    font: inherit;
}

.field-row {
    display: flex;
    align-items: flex-end;
    gap: 6px;
    margin-top: 4px;
}

.field-row label {
    margin-bottom: 2px;
}

.field-row button {
    width: 52px;
    height: 21px;
    border: 1px solid #bbb;
    background: #ccc;
    color: #999;
}

.field-row button + button {
    margin-left: 2px;
}

.dialog-foot {
    display: flex;
    align-items: center;
    gap: 5px;
    padding: 20px 7px 8px 8px;
}

.ring {
    height: 32px;
    padding: 4px;
    border: 4px solid #3851f5;
    border-radius: 12px;
}

.ring.done {
    padding: 3px 12px;
}

.ring.done button {
    display: block;
    width: 52px;
    height: 18px;
    border: 1px solid #aaa;
    background: #e2e2e2;
}

.dialog-foot strong {
    margin-left: auto;
    color: #3851f5;
    font: 500 29px/32px Roboto, sans-serif;
}

/* status bar */
.status {
    display: flex;
    align-items: center;
    height: 26px;
    padding: 2px 2px 0 10px;
    background: #9f9f9f;
}

.ready {
    flex: 1;
}

.pager {
    display: flex;
    align-items: center;
    gap: 4px;
    padding-right: 9px;
    border-right: 1px solid #eee;
}

.pager span {
    margin: 0 12px;
}

.pager svg {
    fill: #aaa;
    stroke: #888;
}

.gauges {
    display: flex;
    gap: 5px;
    margin: 0 7px 0 12px;
}

.bar {
    display: block;
    width: 30px;
    height: 7px;
    border: 1px solid #000;
    background: #d8d8d8;
}

.bar.full {
    background: #0000e0;
}

.bar.part {
    background: linear-gradient(90deg, #0000e0 60%, #d8d8d8 60%);
}

.memory {
    font: 10px "Liberation Sans", Arial, sans-serif;
}
```
